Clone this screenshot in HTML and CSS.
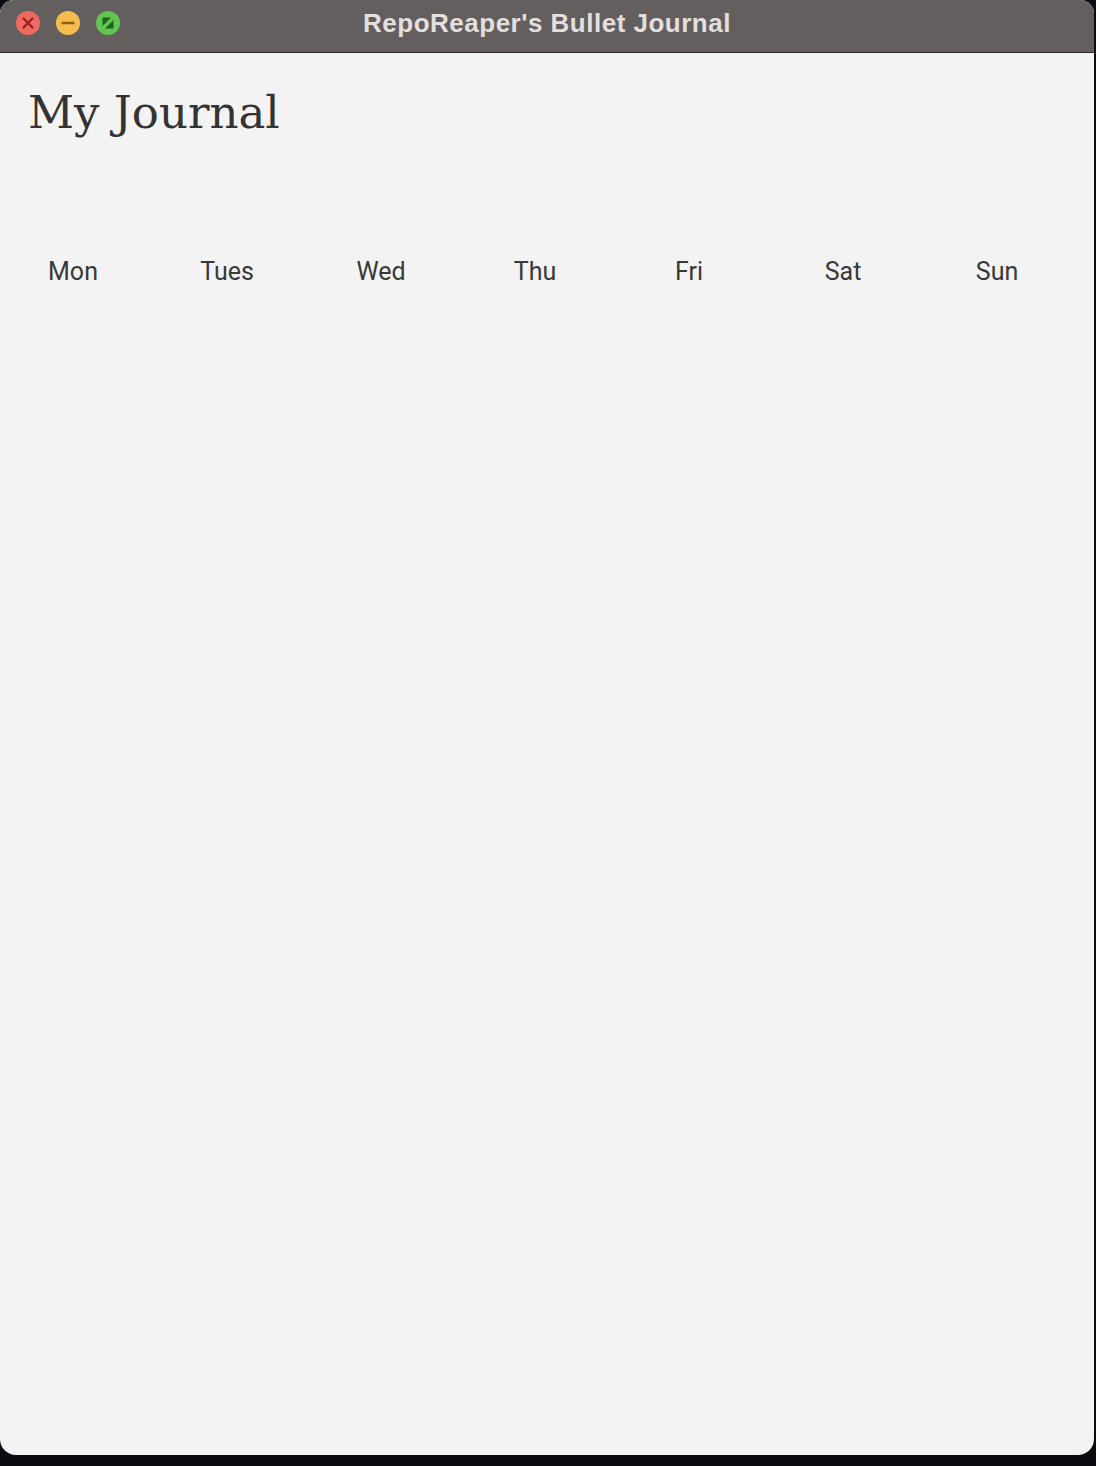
FILE: index.html
```html
<!DOCTYPE html>
<html>
<head>
<meta charset="utf-8">
<link rel="stylesheet" href="styles.css">
<title>RepoReaper's Bullet Journal</title>
</head>
<body>
<div class="window">
  <div class="titlebar">
    <div class="lights">
      <span class="light close">
        <svg width="24" height="24" viewBox="0 0 24 24"><path d="M7.5 7.5 L16.5 16.5 M16.5 7.5 L7.5 16.5" stroke="#9a1c16" stroke-width="2.2" stroke-linecap="round"/></svg>
      </span>
      <span class="light min">
        <svg width="24" height="24" viewBox="0 0 24 24"><path d="M5.5 12 H18.5" stroke="#985e10" stroke-width="2.6"/></svg>
      </span>
      <span class="light max">
        <svg width="24" height="24" viewBox="0 0 24 24"><path d="M6.5 6.5 H15 L6.5 15 Z M17.5 9 V17.5 H9 Z" fill="#23601a"/></svg>
      </span>
    </div>
    <div class="title">RepoReaper's Bullet Journal</div>
  </div>
  <div class="content">
    <h1 class="heading">My Journal</h1>
    <div class="days">
      <div class="day">Mon</div>
      <div class="day">Tues</div>
      <div class="day">Wed</div>
      <div class="day">Thu</div>
      <div class="day">Fri</div>
      <div class="day">Sat</div>
      <div class="day">Sun</div>
    </div>
  </div>
</div>
</body>
</html>
```

FILE: styles.css
```css
html, body {
  margin: 0;
  padding: 0;
  background: #0b0c10;
  width: 1096px;
  height: 1466px;
  overflow: hidden;
}
.window {
  width: 1094px;
  height: 1455px;
  display: flex;
  flex-direction: column;
  background: #f3f3f3;
  border-radius: 14px 14px 16px 16px;
  overflow: hidden;
}
.titlebar {
  height: 52px;
  flex: none;
  background: #645f5e;
  border-bottom: 1px solid #2b2929;
  position: relative;
  display: flex;
  align-items: center;
  justify-content: center;
}
.lights {
  position: absolute;
  left: 16px;
  top: 11px;
  display: flex;
  gap: 16px;
}
.light {
  width: 24px;
  height: 24px;
  border-radius: 50%;
  display: block;
}
.light svg { display: block; }
.close { background: #ec6a5f; }
.min { background: #f4be4f; }
.max { background: #61c554; }
.title {
  font-family: "Liberation Sans", Arial, sans-serif;
  font-weight: bold;
  font-size: 26px;
  color: #e3dfdf;
  letter-spacing: 0.5px;
  margin-top: -5px;
}
.content {
  flex: 1;
  padding: 0;
}
.heading {
  margin: 30px 0 0 28px;
  font-family: "DejaVu Serif", Georgia, serif;
  font-weight: normal;
  font-size: 45px;
  line-height: 60px;
  color: #333333;
}
.days {
  display: grid;
  grid-template-columns: repeat(7, 154px);
  margin: 114px 0 0 -4px;
}
.day {
  text-align: center;
  font-family: Roboto, "Liberation Sans", sans-serif;
  font-weight: 400;
  font-size: 25px;
  line-height: 30px;
  color: #383838;
}
```
